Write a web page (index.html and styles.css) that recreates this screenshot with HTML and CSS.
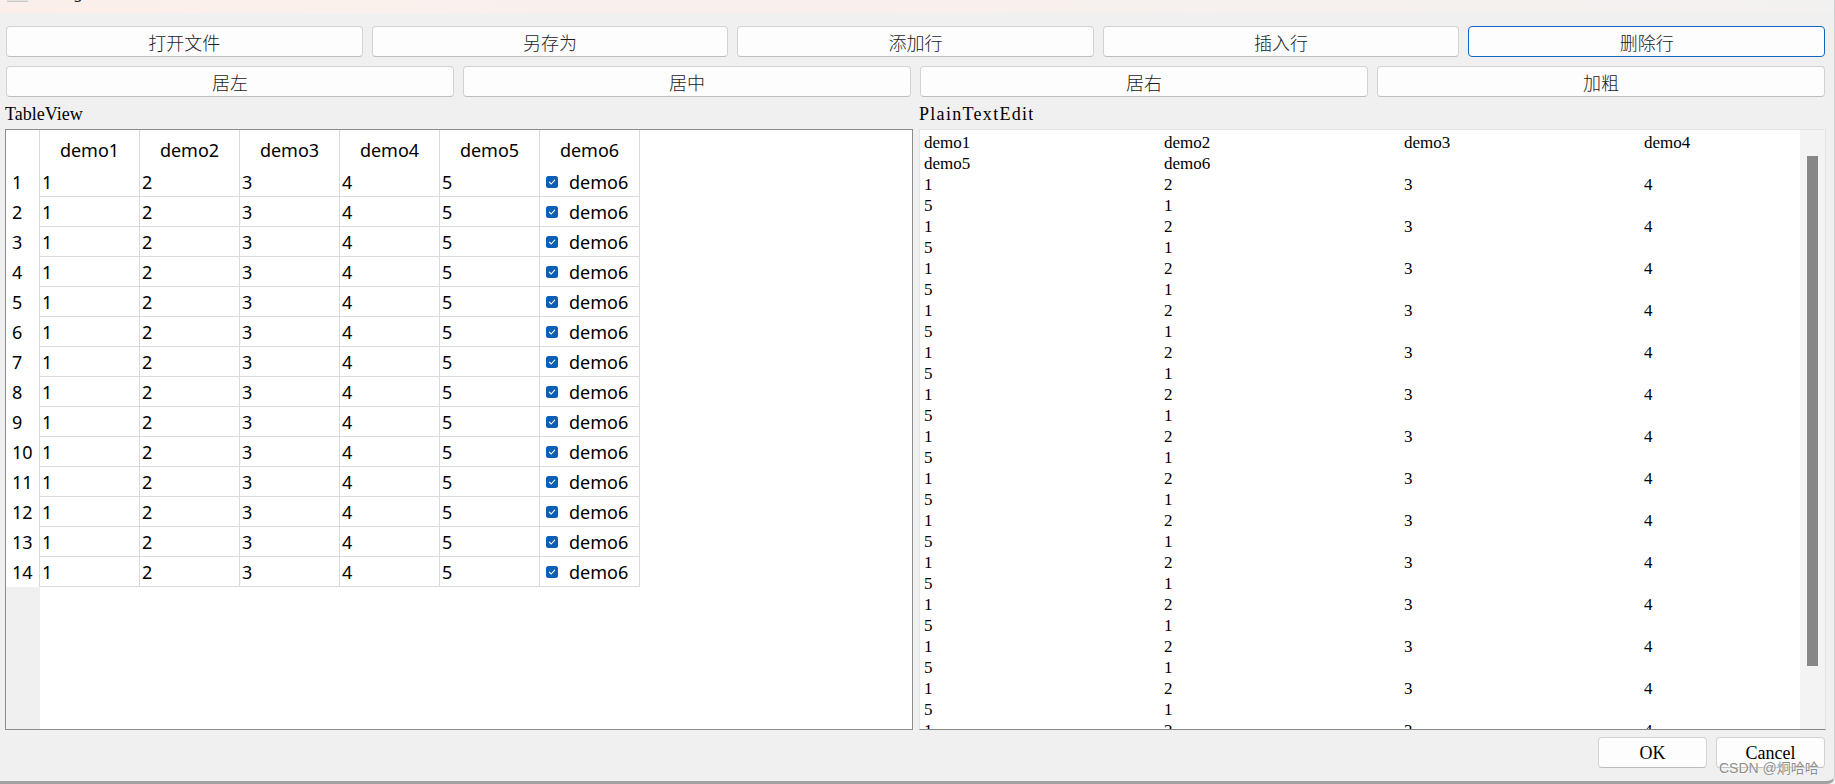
FILE: index.html
```html
<!DOCTYPE html>
<html>
<head>
<meta charset="utf-8">
<link rel="stylesheet" href="styles.css">
</head>
<body>
<div class="window">
  <div class="titlebar"><span class="ticon"></span><span class="ttitle">Dialog</span></div>
  <div class="content">
    <div class="btnrow five">
      <div class="btn">打开文件</div>
      <div class="btn">另存为</div>
      <div class="btn">添加行</div>
      <div class="btn">插入行</div>
      <div class="btn focus">删除行</div>
    </div>
    <div class="btnrow four">
      <div class="btn">居左</div>
      <div class="btn">居中</div>
      <div class="btn">居右</div>
      <div class="btn">加粗</div>
    </div>
    <div class="panels">
      <div class="panel">
        <div class="plabel">TableView</div>
        <div class="tframe">
          <div class="tgrid">
            <div class="corner"></div>
            <div class="hc">demo1</div><div class="hc">demo2</div><div class="hc">demo3</div><div class="hc">demo4</div><div class="hc">demo5</div><div class="hc">demo6</div>

            <div class="vh">1</div><div class="td">1</div><div class="td">2</div><div class="td">3</div><div class="td">4</div><div class="td">5</div><div class="td chk"><svg class="cb" viewBox="0 0 12 12"><rect width="12" height="12" rx="2.5"/><path d="M3.4 6.2l1.8 1.8 3.5-3.8"/></svg>demo6</div>
            <div class="vh">2</div><div class="td">1</div><div class="td">2</div><div class="td">3</div><div class="td">4</div><div class="td">5</div><div class="td chk"><svg class="cb" viewBox="0 0 12 12"><rect width="12" height="12" rx="2.5"/><path d="M3.4 6.2l1.8 1.8 3.5-3.8"/></svg>demo6</div>
            <div class="vh">3</div><div class="td">1</div><div class="td">2</div><div class="td">3</div><div class="td">4</div><div class="td">5</div><div class="td chk"><svg class="cb" viewBox="0 0 12 12"><rect width="12" height="12" rx="2.5"/><path d="M3.4 6.2l1.8 1.8 3.5-3.8"/></svg>demo6</div>
            <div class="vh">4</div><div class="td">1</div><div class="td">2</div><div class="td">3</div><div class="td">4</div><div class="td">5</div><div class="td chk"><svg class="cb" viewBox="0 0 12 12"><rect width="12" height="12" rx="2.5"/><path d="M3.4 6.2l1.8 1.8 3.5-3.8"/></svg>demo6</div>
            <div class="vh">5</div><div class="td">1</div><div class="td">2</div><div class="td">3</div><div class="td">4</div><div class="td">5</div><div class="td chk"><svg class="cb" viewBox="0 0 12 12"><rect width="12" height="12" rx="2.5"/><path d="M3.4 6.2l1.8 1.8 3.5-3.8"/></svg>demo6</div>
            <div class="vh">6</div><div class="td">1</div><div class="td">2</div><div class="td">3</div><div class="td">4</div><div class="td">5</div><div class="td chk"><svg class="cb" viewBox="0 0 12 12"><rect width="12" height="12" rx="2.5"/><path d="M3.4 6.2l1.8 1.8 3.5-3.8"/></svg>demo6</div>
            <div class="vh">7</div><div class="td">1</div><div class="td">2</div><div class="td">3</div><div class="td">4</div><div class="td">5</div><div class="td chk"><svg class="cb" viewBox="0 0 12 12"><rect width="12" height="12" rx="2.5"/><path d="M3.4 6.2l1.8 1.8 3.5-3.8"/></svg>demo6</div>
            <div class="vh">8</div><div class="td">1</div><div class="td">2</div><div class="td">3</div><div class="td">4</div><div class="td">5</div><div class="td chk"><svg class="cb" viewBox="0 0 12 12"><rect width="12" height="12" rx="2.5"/><path d="M3.4 6.2l1.8 1.8 3.5-3.8"/></svg>demo6</div>
            <div class="vh">9</div><div class="td">1</div><div class="td">2</div><div class="td">3</div><div class="td">4</div><div class="td">5</div><div class="td chk"><svg class="cb" viewBox="0 0 12 12"><rect width="12" height="12" rx="2.5"/><path d="M3.4 6.2l1.8 1.8 3.5-3.8"/></svg>demo6</div>
            <div class="vh">10</div><div class="td">1</div><div class="td">2</div><div class="td">3</div><div class="td">4</div><div class="td">5</div><div class="td chk"><svg class="cb" viewBox="0 0 12 12"><rect width="12" height="12" rx="2.5"/><path d="M3.4 6.2l1.8 1.8 3.5-3.8"/></svg>demo6</div>
            <div class="vh">11</div><div class="td">1</div><div class="td">2</div><div class="td">3</div><div class="td">4</div><div class="td">5</div><div class="td chk"><svg class="cb" viewBox="0 0 12 12"><rect width="12" height="12" rx="2.5"/><path d="M3.4 6.2l1.8 1.8 3.5-3.8"/></svg>demo6</div>
            <div class="vh">12</div><div class="td">1</div><div class="td">2</div><div class="td">3</div><div class="td">4</div><div class="td">5</div><div class="td chk"><svg class="cb" viewBox="0 0 12 12"><rect width="12" height="12" rx="2.5"/><path d="M3.4 6.2l1.8 1.8 3.5-3.8"/></svg>demo6</div>
            <div class="vh">13</div><div class="td">1</div><div class="td">2</div><div class="td">3</div><div class="td">4</div><div class="td">5</div><div class="td chk"><svg class="cb" viewBox="0 0 12 12"><rect width="12" height="12" rx="2.5"/><path d="M3.4 6.2l1.8 1.8 3.5-3.8"/></svg>demo6</div>
            <div class="vh">14</div><div class="td">1</div><div class="td">2</div><div class="td">3</div><div class="td">4</div><div class="td">5</div><div class="td chk"><svg class="cb" viewBox="0 0 12 12"><rect width="12" height="12" rx="2.5"/><path d="M3.4 6.2l1.8 1.8 3.5-3.8"/></svg>demo6</div>
          </div>
          <div class="filler"><div class="filler-vh"></div></div>
        </div>
      </div>
      <div class="panel">
        <div class="plabel wide">PlainTextEdit</div>
        <div class="pframe">
          <div class="ptext">
            <div class="rec"><span>demo1</span><span>demo2</span><span>demo3</span><span>demo4</span><span>demo5</span><span>demo6</span></div>
            <div class="rec"><span>1</span><span>2</span><span>3</span><span>4</span><span>5</span><span>1</span></div>
            <div class="rec"><span>1</span><span>2</span><span>3</span><span>4</span><span>5</span><span>1</span></div>
            <div class="rec"><span>1</span><span>2</span><span>3</span><span>4</span><span>5</span><span>1</span></div>
            <div class="rec"><span>1</span><span>2</span><span>3</span><span>4</span><span>5</span><span>1</span></div>
            <div class="rec"><span>1</span><span>2</span><span>3</span><span>4</span><span>5</span><span>1</span></div>
            <div class="rec"><span>1</span><span>2</span><span>3</span><span>4</span><span>5</span><span>1</span></div>
            <div class="rec"><span>1</span><span>2</span><span>3</span><span>4</span><span>5</span><span>1</span></div>
            <div class="rec"><span>1</span><span>2</span><span>3</span><span>4</span><span>5</span><span>1</span></div>
            <div class="rec"><span>1</span><span>2</span><span>3</span><span>4</span><span>5</span><span>1</span></div>
            <div class="rec"><span>1</span><span>2</span><span>3</span><span>4</span><span>5</span><span>1</span></div>
            <div class="rec"><span>1</span><span>2</span><span>3</span><span>4</span><span>5</span><span>1</span></div>
            <div class="rec"><span>1</span><span>2</span><span>3</span><span>4</span><span>5</span><span>1</span></div>
            <div class="rec"><span>1</span><span>2</span><span>3</span><span>4</span><span>5</span><span>1</span></div>
            <div class="rec"><span>1</span><span>2</span><span>3</span><span>4</span><span>5</span><span>1</span></div>
          </div>
          <div class="sbar"><div class="thumb"></div></div>
        </div>
      </div>
    </div>
    <div class="dlgbtns">
      <div class="btn latin">OK</div>
      <div class="btn latin">Cancel</div>
    </div>
  </div>
  <div class="watermark">CSDN @炯哈哈</div>
</div>
</body>
</html>
```

FILE: styles.css
```css
* {
  box-sizing: border-box;
  margin: 0;
  padding: 0;
}

html, body {
  width: 1835px;
  height: 784px;
  overflow: hidden;
  background: #f0f0f0;
}

.window {
  position: relative;
  width: 1835px;
  height: 784px;
  background: #f0f0f0;
  border-right: 1px solid #d2d2d2;
  border-bottom: 3px solid #a2a2a2;
  border-bottom-right-radius: 8px;
  overflow: hidden;
  display: flex;
  flex-direction: column;
}

.titlebar {
  flex: none;
  height: 13px;
  display: flex;
  align-items: flex-start;
  overflow: hidden;
  background: linear-gradient(90deg, #fbefeb 0%, #f8f0ed 45%, #f3f1f0 100%);
}

.ticon {
  width: 21px;
  height: 2px;
  margin-left: 7px;
  background: #e2e2e2;
  border-bottom: 1px solid #c9c9c9;
}

.ttitle {
  font-family: "Noto Sans", sans-serif;
  font-size: 15px;
  line-height: 15px;
  margin-top: -15px;
  margin-left: 9px;
  color: #222;
}

.content {
  flex: 1;
  display: flex;
  flex-direction: column;
  padding: 13px 8px 0 5px;
}

.btnrow {
  display: grid;
  gap: 9px;
  height: 31px;
  margin: 0 1px;
}

.btnrow.five {
  grid-template-columns: repeat(5, 1fr);
}

.btnrow.four {
  grid-template-columns: repeat(4, 1fr);
  margin-top: 9px;
}

.btn {
  display: flex;
  align-items: center;
  justify-content: center;
  background: #fdfdfd;
  border: 1px solid #d3d3d3;
  border-bottom-color: #bdbdbd;
  border-radius: 4px;
  font-family: "Noto Sans CJK SC", sans-serif;
  font-weight: 300;
  font-size: 18px;
  color: #1a1a1a;
  padding-top: 1px;
}

.btn.focus {
  border-color: #1166c1;
}

.btn.latin {
  font-family: "Liberation Serif", serif;
  font-weight: 400;
  font-size: 18px;
  color: #000;
  padding-top: 2px;
}

.panels {
  display: grid;
  grid-template-columns: 908px minmax(0, 1fr);
  column-gap: 6px;
  height: 633px;
}

.panel {
  display: flex;
  flex-direction: column;
  min-width: 0;
}

.plabel {
  height: 32px;
  padding-top: 6px;
  font-family: "Liberation Serif", serif;
  font-size: 18px;
  line-height: 22px;
  color: #000;
}

.plabel.wide {
  letter-spacing: 1.3px;
}

.tframe {
  height: 601px;
  border: 1px solid #8c8c8c;
  background: #fff;
  display: flex;
  flex-direction: column;
  overflow: hidden;
}

.tgrid {
  display: grid;
  grid-template-columns: 34px repeat(6, 100px);
  grid-template-rows: 37px repeat(14, 30px);
  font-family: "Noto Sans", sans-serif;
  font-size: 18px;
  color: #000;
}

.corner {
  border-right: 1px solid #dadada;
}

.hc {
  display: flex;
  align-items: center;
  justify-content: center;
  border-right: 1px solid #dadada;
  padding-top: 3px;
}

.vh {
  display: flex;
  align-items: center;
  padding-left: 6px;
  border-right: 1px solid #dadada;
}

.td {
  display: flex;
  align-items: center;
  padding-left: 2px;
  border-right: 1px solid #dadada;
  border-bottom: 1px solid #dadada;
}

.td.chk {
  padding-left: 6px;
}

.cb {
  width: 12px;
  height: 12px;
  margin-right: 11px;
  flex: none;
}

.cb rect {
  fill: #0c5fb6;
}

.cb path {
  fill: none;
  stroke: #ffffff;
  stroke-width: 1.1;
  stroke-linecap: round;
  stroke-linejoin: round;
}

.filler {
  flex: 1;
  display: flex;
}

.filler-vh {
  width: 34px;
  background: #f0f0f0;
}

.pframe {
  height: 601px;
  display: flex;
  background: #fff;
  border: 1px solid #e4e4e4;
  border-bottom-color: #878787;
  overflow: hidden;
}

.ptext {
  flex: 1;
  min-width: 0;
  overflow: hidden;
  padding: 2px 0 0 4px;
  font-family: "Liberation Serif", serif;
  font-size: 17px;
  line-height: 21px;
  color: #000;
}

.rec {
  display: grid;
  grid-template-columns: 240px 240px 240px minmax(0, 1fr);
}

.sbar {
  width: 25px;
  flex: none;
  background: #f3f3f3;
  padding: 26px 0 0 7px;
}

.thumb {
  width: 11px;
  height: 510px;
  background: #878787;
}

.dlgbtns {
  display: flex;
  justify-content: flex-end;
  gap: 9px;
  height: 31px;
  margin-top: 7px;
  margin-right: 1px;
}

.dlgbtns .btn {
  width: 109px;
}

.watermark {
  position: absolute;
  left: 1719px;
  top: 759px;
  font-family: "Liberation Sans", "Noto Sans CJK SC", sans-serif;
  font-size: 14px;
  line-height: 18px;
  color: #8e8e8e;
  text-shadow: 0 0 2px #ffffff, 0 0 1px #ffffff;
  white-space: nowrap;
}
```
